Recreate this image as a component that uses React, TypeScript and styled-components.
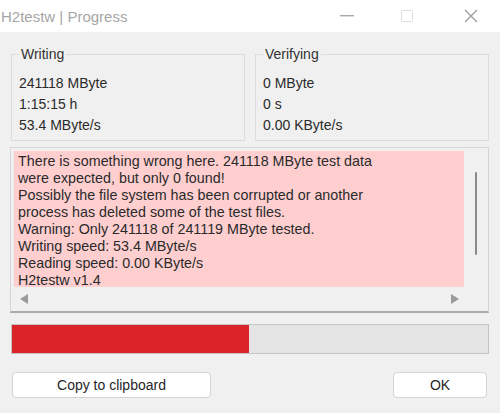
import styled, { createGlobalStyle } from "styled-components";

const GlobalStyle = createGlobalStyle`
  html, body {
    margin: 0;
    padding: 0;
    background: #f0f0f0;
  }
  * {
    box-sizing: border-box;
  }
`;

const Window = styled.div`
  width: 500px;
  height: 413px;
  background: #f0f0f0;
  font-family: "Liberation Sans", Arial, sans-serif;
  color: #2e2e2e;
  display: flex;
  flex-direction: column;
  overflow: hidden;
`;

const TitleBar = styled.div`
  height: 32px;
  background: #ffffff;
  display: flex;
  align-items: center;
  padding-left: 1px;
`;

const Title = styled.div`
  flex: 1;
  font-size: 15px;
  color: #a6a6a6;
`;

const Controls = styled.div`
  display: flex;
  align-items: center;
  height: 100%;
`;

const ControlButton = styled.div<{ $w: number }>`
  width: ${(p) => p.$w}px;
  height: 100%;
  display: flex;
  align-items: center;
  justify-content: center;
`;

const Content = styled.div`
  flex: 1;
  display: flex;
  flex-direction: column;
  padding: 14px 11px 0 10px;
`;

const GroupRow = styled.div`
  display: grid;
  grid-template-columns: 234px 234px;
  column-gap: 10px;
  padding-left: 1px;
`;

const Group = styled.fieldset`
  margin: 0;
  height: 95px;
  border: 1px solid #dcdcdc;
  padding: 11px 0 0 7px;
  min-width: 0;
`;

const Legend = styled.legend`
  padding: 0 2px;
  margin-left: 0;
  font-size: 14px;
  color: #333;
`;

const Value = styled.div`
  font-size: 14px;
  line-height: 21px;
  color: #2a2a2a;
`;

const MessageBox = styled.div`
  margin-top: 6px;
  height: 166px;
  border: 1px solid #d6d6d6;
  border-bottom: 2px solid #a9a9a9;
  background: #f0f0f0;
  display: grid;
  grid-template-columns: 1fr 24px;
  grid-template-rows: 136px 1fr;
  padding: 3px 0 0 3px;
`;

const Message = styled.div`
  background: #ffcfd0;
  padding: 2px 0 0 4px;
  font-size: 14.3px;
  line-height: 17px;
  color: #2a2a2a;
  white-space: pre;
  overflow: hidden;
`;

const VScroll = styled.div`
  display: flex;
  justify-content: center;
  padding-top: 21px;
`;

const VThumb = styled.div`
  width: 2px;
  height: 83px;
  background: #8a8a8a;
  border-radius: 1px;
`;

const HScroll = styled.div`
  grid-column: 1 / 3;
  display: flex;
  align-items: center;
  justify-content: space-between;
  padding: 0 29px 0 6px;
`;

const Arrow = styled.div<{ $dir: "left" | "right" }>`
  width: 0;
  height: 0;
  border-top: 5px solid transparent;
  border-bottom: 5px solid transparent;
  ${(p) =>
    p.$dir === "left"
      ? "border-right: 8px solid #9a9a9a;"
      : "border-left: 8px solid #9a9a9a;"}
`;

const Progress = styled.div`
  margin-top: 11px;
  margin-left: 1px;
  height: 30px;
  border: 1px solid #c4c4c4;
  background: #e4e4e4;
`;

const ProgressFill = styled.div`
  height: 100%;
  background: #da2428;
`;

const ButtonRow = styled.div`
  margin-top: 18px;
  display: flex;
  justify-content: space-between;
  padding-left: 2px;
  padding-right: 2px;
`;

const Button = styled.button<{ $w: number }>`
  width: ${(p) => p.$w}px;
  height: 26px;
  background: #ffffff;
  border: 1px solid #d4d4d4;
  border-radius: 4px;
  font-family: "Liberation Sans", Arial, sans-serif;
  font-size: 14px;
  color: #262626;
  padding: 0;
`;

const lines = [
  "There is something wrong here. 241118 MByte test data",
  "were expected, but only 0 found!",
  "Possibly the file system has been corrupted or another",
  "process has deleted some of the test files.",
  "Warning: Only 241118 of 241119 MByte tested.",
  "Writing speed: 53.4 MByte/s",
  "Reading speed: 0.00 KByte/s",
  "H2testw v1.4",
];

export default function App() {
  const progress = 238 / 478;
  return (
    <>
      <GlobalStyle />
      <Window>
        <TitleBar>
          <Title>H2testw | Progress</Title>
          <Controls>
            <ControlButton $w={50}>
              <svg width="14" height="2" viewBox="0 0 14 2">
                <rect width="14" height="1.4" fill="#a9a9a9" />
              </svg>
            </ControlButton>
            <ControlButton $w={70}>
              <svg width="12" height="12" viewBox="0 0 12 12">
                <rect x="0.5" y="0.5" width="11" height="11" rx="1" fill="none" stroke="#dedede" />
              </svg>
            </ControlButton>
            <ControlButton $w={58}>
              <svg width="14" height="14" viewBox="0 0 14 14">
                <path d="M1 1 L13 13 M13 1 L1 13" stroke="#9c9c9c" strokeWidth="1.3" />
              </svg>
            </ControlButton>
          </Controls>
        </TitleBar>
        <Content>
          <GroupRow>
            <Group>
              <Legend>Writing</Legend>
              <Value>241118 MByte</Value>
              <Value>1:15:15 h</Value>
              <Value>53.4 MByte/s</Value>
            </Group>
            <Group>
              <Legend>Verifying</Legend>
              <Value>0 MByte</Value>
              <Value>0 s</Value>
              <Value>0.00 KByte/s</Value>
            </Group>
          </GroupRow>
          <MessageBox>
            <Message>{lines.join("\n")}</Message>
            <VScroll>
              <VThumb />
            </VScroll>
            <HScroll>
              <Arrow $dir="left" />
              <Arrow $dir="right" />
            </HScroll>
          </MessageBox>
          <Progress>
            <ProgressFill style={{ width: `${progress * 100}%` }} />
          </Progress>
          <ButtonRow>
            <Button $w={199}>Copy to clipboard</Button>
            <Button $w={94}>OK</Button>
          </ButtonRow>
        </Content>
      </Window>
    </>
  );
}
